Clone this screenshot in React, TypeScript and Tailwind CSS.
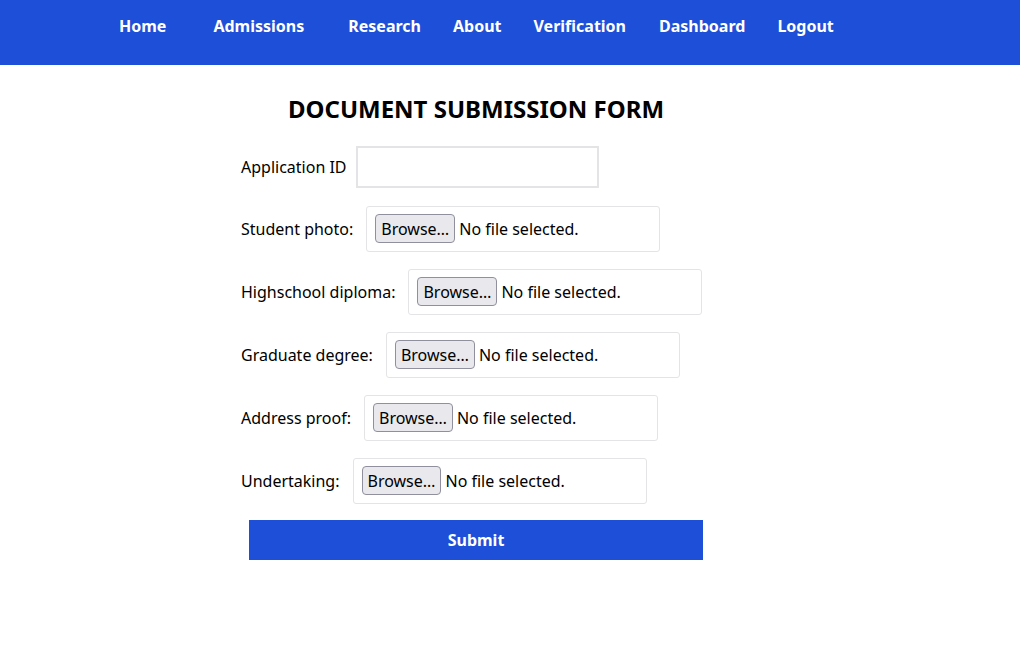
export default function App() {
  const navItems = [
    { label: "Home", cls: "ml-[119px] mr-[47px]" },
    { label: "Admissions", cls: "mr-[44px]" },
    { label: "Research", cls: "mr-[32px]" },
    { label: "About", cls: "mr-[32px]" },
    { label: "Verification", cls: "mr-[33px]" },
    { label: "Dashboard", cls: "mr-[32px]" },
    { label: "Logout", cls: "" },
  ];

  const files = [
    "Student photo:",
    "Highschool diploma:",
    "Graduate degree:",
    "Address proof:",
    "Undertaking:",
  ];

  return (
    <div className="min-h-screen bg-white text-black font-['Noto_Sans',sans-serif]">
      {/* NAV */}
      <nav className="h-[65px] bg-[#1e4fd8] flex items-start pt-[14px]">
        {navItems.map((item) => (
          <a
            key={item.label}
            href="#"
            className={`text-white font-bold text-[16px] leading-6 ${item.cls}`}
          >
            {item.label}
          </a>
        ))}
      </nav>

      {/* FORM */}
      <div className="ml-[233px] w-[486px] pt-[28px]">
        <h1 className="text-center font-bold text-[24px] leading-8 mb-[21px]">
          DOCUMENT SUBMISSION FORM
        </h1>

        <div className="pl-[8px] flex flex-col gap-[18px]">
          <div className="flex items-center gap-[9px] h-[42px]">
            <label className="text-[16px]">Application ID</label>
            <input
              type="text"
              className="w-[243px] h-[42px] border-2 border-[#e4e4e7] outline-none"
            />
          </div>

          {files.map((f) => (
            <div key={f} className="flex items-center gap-[13px] h-[45px]">
              <label className="text-[16px]">{f}</label>
              <div className="w-[294px] h-[46px] border border-[#e4e4e7] rounded-[3px] flex items-center pl-[8px]">
                <span className="h-[29px] px-[5px] flex items-center bg-[#e9e9ed] border border-[#8f8f9d] rounded-[4px] text-[16px]">
                  Browse…
                </span>
                <span className="ml-[4px] text-[16px]">No file selected.</span>
              </div>
            </div>
          ))}

          <button className="mt-[-1px] ml-[8px] h-[40px] w-[454px] bg-[#1e4fd8] text-white font-bold text-[16px]">
            Submit
          </button>
        </div>
      </div>
    </div>
  );
}
